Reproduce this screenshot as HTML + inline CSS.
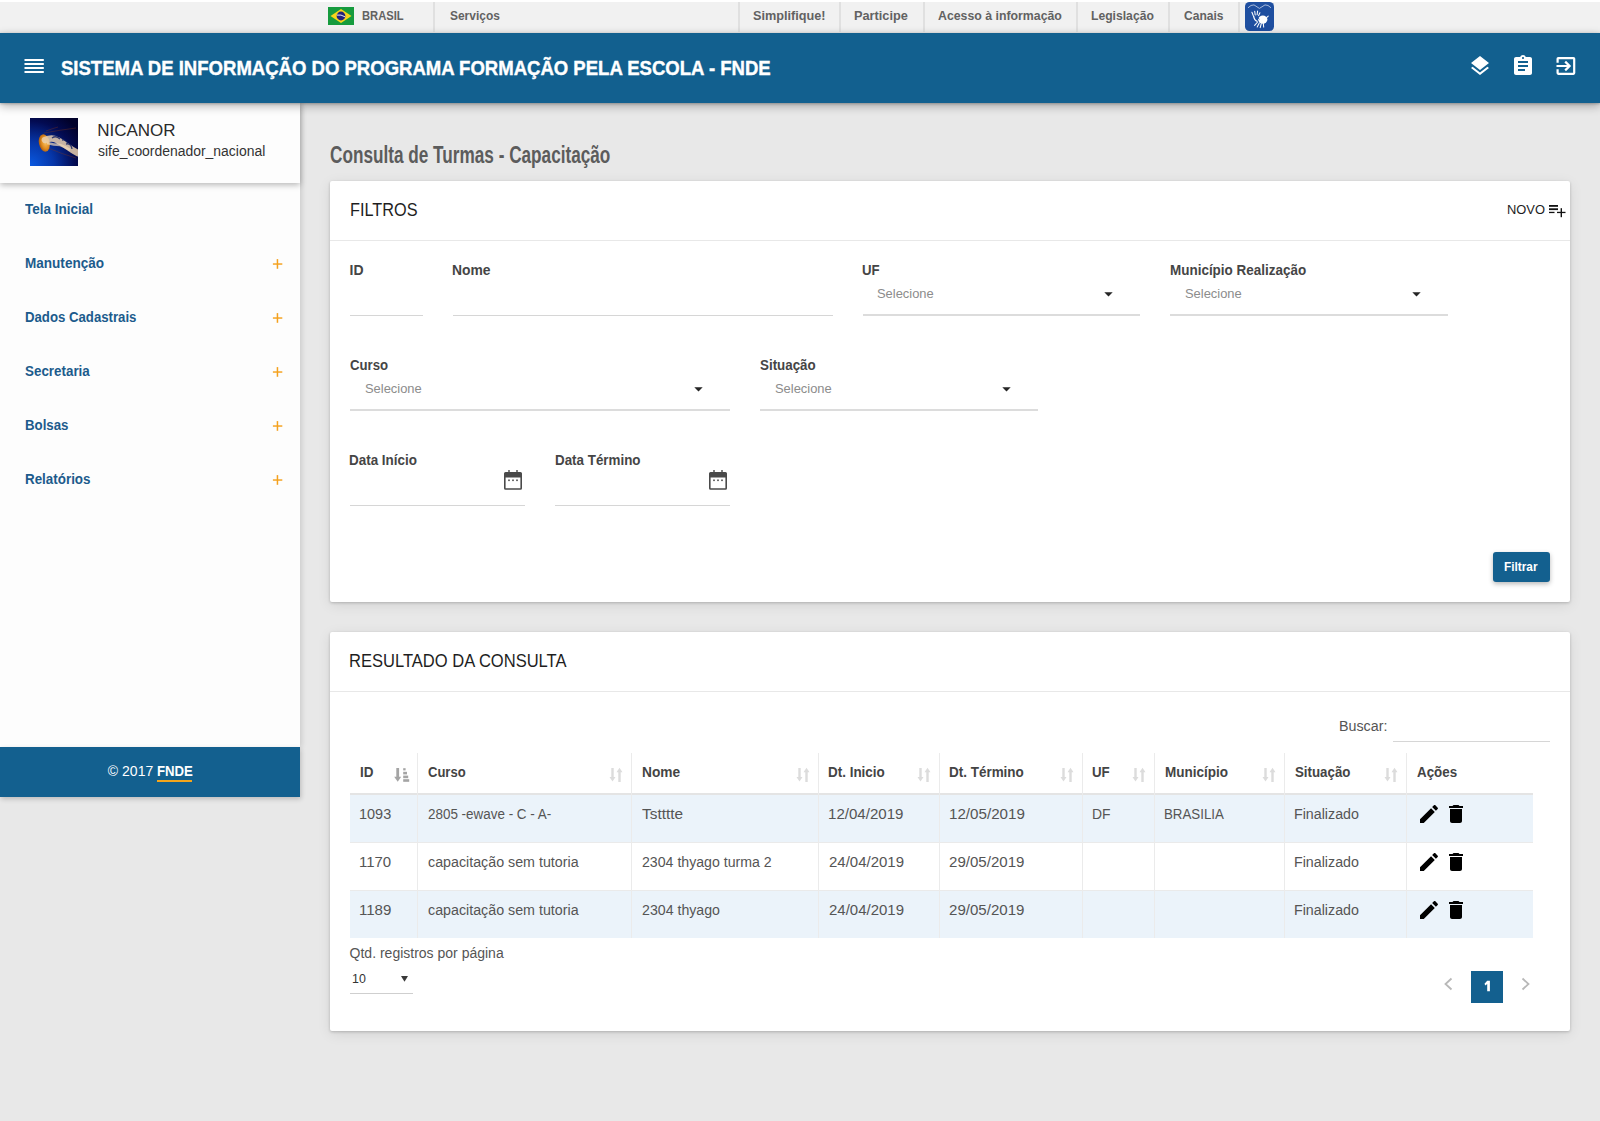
<!DOCTYPE html><html><head><meta charset="utf-8"><title>SIFE</title><style>
*{box-sizing:border-box;margin:0;padding:0}
html,body{width:1600px;height:1121px;overflow:hidden;background:#e8e8e8;font-family:"Liberation Sans",sans-serif;position:relative}
.a{position:absolute}
.t{position:absolute;white-space:nowrap;line-height:1}
</style></head><body>
<div class="a" style="left:0;top:0;width:1600px;height:2px;background:#fff"></div>
<div class="a" style="left:0;top:2px;width:1600px;height:31px;background:linear-gradient(#f1f1f1 0,#f1f1f1 27px,#e9e9e9 31px)"></div>
<div class="a" style="left:433px;top:2px;width:2px;height:30px;background:#e0e0e0"></div>
<div class="a" style="left:738px;top:2px;width:2px;height:30px;background:#e0e0e0"></div>
<div class="a" style="left:839px;top:2px;width:2px;height:30px;background:#e0e0e0"></div>
<div class="a" style="left:923px;top:2px;width:2px;height:30px;background:#e0e0e0"></div>
<div class="a" style="left:1076px;top:2px;width:2px;height:30px;background:#e0e0e0"></div>
<div class="a" style="left:1168px;top:2px;width:2px;height:30px;background:#e0e0e0"></div>
<div class="a" style="left:1238px;top:2px;width:2px;height:30px;background:#e0e0e0"></div>
<svg class="a" style="left:328px;top:7px" width="26" height="18" viewBox="0 0 26 18"><rect width="26" height="18" fill="#169b3e"/><polygon points="2.5,9 13,2 23.5,9 13,16" fill="#f7d51a"/><circle cx="13" cy="9" r="4.4" fill="#24237b"/><path d="M8.8,8.1 Q13,7.2 17.2,9.9" stroke="#fff" stroke-width="0.9" fill="none"/></svg>
<div class="t" style="left:361.72px;top:8.87px;font-size:13.5px;font-weight:bold;color:#626262;transform:scaleX(0.8287);transform-origin:0 0;">BRASIL</div>
<div class="t" style="left:449.64px;top:8.87px;font-size:13.5px;font-weight:bold;color:#626262;transform:scaleX(0.8853);transform-origin:0 0;">Serviços</div>
<div class="t" style="left:752.62px;top:8.87px;font-size:13.5px;font-weight:bold;color:#626262;transform:scaleX(0.9392);transform-origin:0 0;">Simplifique!</div>
<div class="t" style="left:854.11px;top:8.87px;font-size:13.5px;font-weight:bold;color:#626262;transform:scaleX(0.9439);transform-origin:0 0;">Participe</div>
<div class="t" style="left:937.63px;top:8.87px;font-size:13.5px;font-weight:bold;color:#626262;transform:scaleX(0.9120);transform-origin:0 0;">Acesso à informação</div>
<div class="t" style="left:1090.65px;top:8.87px;font-size:13.5px;font-weight:bold;color:#626262;transform:scaleX(0.9003);transform-origin:0 0;">Legislação</div>
<div class="t" style="left:1183.52px;top:8.87px;font-size:13.5px;font-weight:bold;color:#626262;transform:scaleX(0.8912);transform-origin:0 0;">Canais</div>
<svg class="a" style="left:1245px;top:2px" width="29" height="29" viewBox="0 0 29 29"><rect x="0" y="0" width="29" height="29" rx="4.5" fill="#1f4fa0"/>
<path d="M3,5.8 Q6,2.6 9,2.9 L14.4,6.4 L20,2.9 Q23,2.6 26,5.8" stroke="#c9d4ea" stroke-width="0.8" fill="none"/>
<path d="M8.3,13.8 L6.9,10.2 M10.2,13 L9.7,9.3 M12.1,12.8 L12.6,9 M13.6,13.6 L14.9,10.8" stroke="#fff" stroke-width="1.05" stroke-linecap="round" fill="none"/>
<path d="M8.6,14 Q9.2,18.5 12.5,19.5" stroke="#fff" stroke-width="1.3" fill="none"/>
<path d="M12.6,20 L9.6,23.4 M14.3,21 L12.2,25 M16.3,21.5 L15.2,25.6 M18.3,21.2 L18.7,25.1" stroke="#fff" stroke-width="1.05" stroke-linecap="round" fill="none"/>
<ellipse cx="17.8" cy="17.6" rx="4.6" ry="4.1" fill="#fff"/><path d="M21.6,15.6 L23.2,14.2" stroke="#fff" stroke-width="1.1" stroke-linecap="round"/>
<path d="M11.5,16.2 Q13.5,15.2 14.4,17.4" stroke="#1f4fa0" stroke-width="0.8" fill="none"/></svg>
<div class="a" style="left:0;top:33px;width:1600px;height:70px;background:#12608f;box-shadow:0 1px 2px rgba(0,0,0,.2),0 3px 9px rgba(0,0,0,.3);z-index:5"></div>
<div class="a" style="left:0;top:33px;width:1600px;height:70px;z-index:6">
<svg class="a" style="left:24px;top:25px" width="21" height="15"><g fill="#fff"><rect x="0.5" y="1" width="19.3" height="2"/><rect x="0.5" y="5" width="19.3" height="2"/><rect x="0.5" y="9" width="19.3" height="2"/><rect x="0.5" y="13" width="19.3" height="2"/></g></svg>
</div>
<div class="t" style="left:60.94px;top:58.07px;font-size:20px;font-weight:bold;color:#fff;transform:scaleX(0.9266);transform-origin:0 0;z-index:7;-webkit-text-stroke:0.4px #fff;">SISTEMA DE INFORMAÇÃO DO PROGRAMA FORMAÇÃO PELA ESCOLA - FNDE</div>
<svg class="a" style="left:1468px;top:54px;z-index:7" width="24" height="24" viewBox="0 0 24 24"><path fill="#fff" d="M11.99 18.54l-7.37-5.73L3 14.07l9 7 9-7-1.63-1.27-7.38 5.74zM12 16l7.36-5.73L21 9l-9-7-9 7 1.63 1.27L12 16z"/></svg>
<svg class="a" style="left:1511px;top:54px;z-index:7" width="24" height="24" viewBox="0 0 24 24"><path fill="#fff" d="M19 3h-4.18C14.4 1.84 13.3 1 12 1c-1.3 0-2.4.84-2.82 2H5c-1.1 0-2 .9-2 2v14c0 1.1.9 2 2 2h14c1.1 0 2-.9 2-2V5c0-1.1-.9-2-2-2zm-7 0c.55 0 1 .45 1 1s-.45 1-1 1-1-.45-1-1 .45-1 1-1zm2 14H7v-2h7v2zm3-4H7v-2h10v2zm0-4H7V7h10v2z"/></svg>
<svg class="a" style="left:1553px;top:54px;z-index:7" width="26" height="24" viewBox="0 0 26 24"><path d="M4.6,8.8 V4.8 Q4.6,4.1 5.3,4.1 H20.5 Q21.2,4.1 21.2,4.8 V19.1 Q21.2,19.8 20.5,19.8 H5.3 Q4.6,19.8 4.6,19.1 V15.3" stroke="#fff" stroke-width="2.2" fill="none"/><path d="M3.5,12 H16.5 M12.2,7.6 L16.6,12 L12.2,16.4" stroke="#fff" stroke-width="2.2" fill="none"/></svg>
<div class="a" style="left:0;top:103px;width:300px;height:644px;background:#fdfdfd;box-shadow:2px 0 5px rgba(0,0,0,.12);z-index:2"></div>
<div class="a" style="left:0;top:747px;width:300px;height:50px;background:#13608f;box-shadow:1px 2px 5px rgba(0,0,0,.2);z-index:2"></div>
<div class="a" style="left:0;top:103px;width:300px;height:80px;background:#fdfdfd;box-shadow:0 2px 6px rgba(0,0,0,.28);z-index:3"></div>
<svg class="a" style="left:30px;top:118px;z-index:4" width="48" height="48" viewBox="0 0 48 48"><defs><radialGradient id="av" cx="0" cy="1" r="1.25"><stop offset="0" stop-color="#0a5ae2"/><stop offset=".4" stop-color="#0636a8"/><stop offset=".75" stop-color="#030b52"/><stop offset="1" stop-color="#01012a"/></radialGradient><radialGradient id="bell" cx=".6" cy=".5" r=".6"><stop offset="0" stop-color="#f8c060"/><stop offset=".6" stop-color="#e08a1e"/><stop offset="1" stop-color="#a85a10"/></radialGradient></defs><rect width="48" height="48" fill="url(#av)"/>
<path d="M14,15 Q30,12 46,10 M18,30 Q32,36 46,40 M16,13 Q24,10 28,9" stroke="#8a3a18" stroke-width=".5" fill="none" opacity=".7"/>
<ellipse cx="14.3" cy="25" rx="5.4" ry="8.8" transform="rotate(-12 14.3 25)" fill="url(#bell)"/>
<path d="M15,22 Q22,19 27,22 Q33,25 38,29 Q42,32 47.5,35" stroke="#e9cfae" stroke-width="6.5" fill="none" opacity=".85" stroke-linecap="round"/>
<path d="M17,25 Q24,27 30,27 Q36,29 40,32" stroke="#f0d8b8" stroke-width="2.5" fill="none" opacity=".7"/>
<path d="M22,20 Q26,17 30,21 M32,22 Q36,21 38,26 M36,26 Q41,25 42,31" stroke="#0a1a60" stroke-width="1.3" fill="none" opacity=".8"/>
</svg>
<div class="t" style="left:97.14px;top:121.81px;font-size:17px;font-weight:normal;color:#2a2a2a;z-index:4;">NICANOR</div>
<div class="t" style="left:97.58px;top:144.40px;font-size:14px;font-weight:normal;color:#333;transform:scaleX(0.9947);transform-origin:0 0;z-index:4;">sife_coordenador_nacional</div>
<div class="t" style="left:25.36px;top:202.05px;font-size:14px;font-weight:bold;color:#1c5b8c;transform:scaleX(0.9649);transform-origin:0 0;z-index:4;">Tela Inicial</div>
<div class="t" style="left:24.55px;top:256.05px;font-size:14px;font-weight:bold;color:#1c5b8c;transform:scaleX(0.9678);transform-origin:0 0;z-index:4;">Manutenção</div>
<svg class="a" style="left:270px;top:257.80px;z-index:4" width="16" height="12" viewBox="0 0 16 12"><g fill="#f4a11e"><rect x="2.9" y="5.3" width="9.4" height="1.45"/><rect x="6.7" y="1.1" width="1.5" height="9.7"/></g></svg>
<div class="t" style="left:24.58px;top:310.05px;font-size:14px;font-weight:bold;color:#1c5b8c;transform:scaleX(0.9421);transform-origin:0 0;z-index:4;">Dados Cadastrais</div>
<svg class="a" style="left:270px;top:311.80px;z-index:4" width="16" height="12" viewBox="0 0 16 12"><g fill="#f4a11e"><rect x="2.9" y="5.3" width="9.4" height="1.45"/><rect x="6.7" y="1.1" width="1.5" height="9.7"/></g></svg>
<div class="t" style="left:25.10px;top:364.05px;font-size:14px;font-weight:bold;color:#1c5b8c;transform:scaleX(0.9563);transform-origin:0 0;z-index:4;">Secretaria</div>
<svg class="a" style="left:270px;top:365.80px;z-index:4" width="16" height="12" viewBox="0 0 16 12"><g fill="#f4a11e"><rect x="2.9" y="5.3" width="9.4" height="1.45"/><rect x="6.7" y="1.1" width="1.5" height="9.7"/></g></svg>
<div class="t" style="left:24.57px;top:418.05px;font-size:14px;font-weight:bold;color:#1c5b8c;transform:scaleX(0.9464);transform-origin:0 0;z-index:4;">Bolsas</div>
<svg class="a" style="left:270px;top:419.80px;z-index:4" width="16" height="12" viewBox="0 0 16 12"><g fill="#f4a11e"><rect x="2.9" y="5.3" width="9.4" height="1.45"/><rect x="6.7" y="1.1" width="1.5" height="9.7"/></g></svg>
<div class="t" style="left:24.56px;top:472.05px;font-size:14px;font-weight:bold;color:#1c5b8c;transform:scaleX(0.9564);transform-origin:0 0;z-index:4;">Relatórios</div>
<svg class="a" style="left:270px;top:473.80px;z-index:4" width="16" height="12" viewBox="0 0 16 12"><g fill="#f4a11e"><rect x="2.9" y="5.3" width="9.4" height="1.45"/><rect x="6.7" y="1.1" width="1.5" height="9.7"/></g></svg>
<div class="t" style="left:107.86px;top:763.55px;font-size:14px;font-weight:normal;color:#fff;z-index:4;">© 2017 </div>
<div class="a" style="left:157px;top:780px;width:35px;height:2px;background:#f4a51c;z-index:4"></div>
<div class="t" style="left:156.58px;top:763.55px;font-size:14px;font-weight:bold;color:#fff;transform:scaleX(0.9406);transform-origin:0 0;z-index:4;">FNDE</div>
<div class="t" style="left:329.91px;top:143.53px;font-size:23px;font-weight:bold;color:#5c5c5c;transform:scaleX(0.7469);transform-origin:0 0;">Consulta de Turmas - Capacitação</div>
<div class="a" style="left:330px;top:181px;width:1240px;height:421px;background:#fff;border-radius:2px;box-shadow:0 1px 3px rgba(0,0,0,.2),0 3px 14px rgba(0,0,0,.09)"></div>
<div class="a" style="left:330px;top:240px;width:1240px;height:1px;background:#e8e8e8"></div>
<div class="t" style="left:349.70px;top:200.66px;font-size:18px;font-weight:normal;color:#1e1e1e;transform:scaleX(0.9038);transform-origin:0 0;">FILTROS</div>
<div class="t" style="left:1506.87px;top:203.27px;font-size:13.5px;font-weight:normal;color:#1e1e1e;transform:scaleX(0.9561);transform-origin:0 0;">NOVO</div>
<svg class="a" style="left:1548px;top:203px" width="19" height="16"><g fill="#111"><rect x="1" y="2" width="9" height="1.8"/><rect x="1" y="5.3" width="9" height="1.8"/><rect x="1" y="8.8" width="5.5" height="1.3"/><rect x="9" y="8.8" width="8.5" height="1.3"/><rect x="12.6" y="5.2" width="1.4" height="9"/></g></svg>
<div class="t" style="left:349.52px;top:263.15px;font-size:14px;font-weight:bold;color:#454545;">ID</div>
<div class="t" style="left:452.03px;top:263.15px;font-size:14px;font-weight:bold;color:#454545;transform:scaleX(0.9898);transform-origin:0 0;">Nome</div>
<div class="t" style="left:862.21px;top:263.15px;font-size:14px;font-weight:bold;color:#454545;transform:scaleX(0.9447);transform-origin:0 0;">UF</div>
<div class="t" style="left:1169.56px;top:263.15px;font-size:14px;font-weight:bold;color:#454545;transform:scaleX(0.9614);transform-origin:0 0;">Município Realização</div>
<div class="a" style="left:350px;top:315px;width:73px;height:1px;background:#d6d6d6"></div>
<div class="a" style="left:453px;top:315px;width:380px;height:1px;background:#d6d6d6"></div>
<div class="a" style="left:863px;top:314px;width:277px;height:2px;background:#dcdcdc"></div>
<div class="a" style="left:1170px;top:314px;width:278px;height:2px;background:#dcdcdc"></div>
<div class="t" style="left:877.35px;top:287.00px;font-size:13px;font-weight:normal;color:#8c8c8c;transform:scaleX(0.9928);transform-origin:0 0;">Selecione</div>
<div class="t" style="left:1184.55px;top:287.00px;font-size:13px;font-weight:normal;color:#8c8c8c;transform:scaleX(0.9928);transform-origin:0 0;">Selecione</div>
<svg class="a" style="left:1103.5px;top:291.5px" width="9" height="5"><path d="M0.3,0.3 H8.7 L4.5,4.6Z" fill="#252525"/></svg>
<svg class="a" style="left:1411.5px;top:291.5px" width="9" height="5"><path d="M0.3,0.3 H8.7 L4.5,4.6Z" fill="#252525"/></svg>
<div class="t" style="left:349.97px;top:358.05px;font-size:14px;font-weight:bold;color:#454545;transform:scaleX(0.9405);transform-origin:0 0;">Curso</div>
<div class="t" style="left:759.80px;top:358.05px;font-size:14px;font-weight:bold;color:#454545;transform:scaleX(0.9547);transform-origin:0 0;">Situação</div>
<div class="t" style="left:364.85px;top:381.80px;font-size:13px;font-weight:normal;color:#8c8c8c;transform:scaleX(0.9928);transform-origin:0 0;">Selecione</div>
<div class="t" style="left:774.85px;top:381.80px;font-size:13px;font-weight:normal;color:#8c8c8c;transform:scaleX(0.9928);transform-origin:0 0;">Selecione</div>
<svg class="a" style="left:693.5px;top:386.5px" width="9" height="5"><path d="M0.3,0.3 H8.7 L4.5,4.6Z" fill="#252525"/></svg>
<svg class="a" style="left:1001.5px;top:386.5px" width="9" height="5"><path d="M0.3,0.3 H8.7 L4.5,4.6Z" fill="#252525"/></svg>
<div class="a" style="left:350px;top:409px;width:380px;height:2px;background:#dcdcdc"></div>
<div class="a" style="left:760px;top:409px;width:278px;height:2px;background:#dcdcdc"></div>
<div class="t" style="left:349.06px;top:452.90px;font-size:14px;font-weight:bold;color:#454545;transform:scaleX(0.9596);transform-origin:0 0;">Data Início</div>
<div class="t" style="left:554.66px;top:452.90px;font-size:14px;font-weight:bold;color:#454545;transform:scaleX(0.9554);transform-origin:0 0;">Data Término</div>
<svg class="a" style="left:504px;top:470px" width="18" height="20" viewBox="0 0 18 20"><g fill="#4a4a4a"><rect x="4.3" y="0" width="1.4" height="3"/><rect x="12.3" y="0" width="1.4" height="3"/><path d="M1.5,2 H16.5 Q18,2 18,3.5 V18.3 Q18,19.8 16.5,19.8 H1.5 Q0,19.8 0,18.3 V3.5 Q0,2 1.5,2Z M1.6,7.5 V18.2 H16.4 V7.5Z"/><rect x="4.2" y="9.5" width="1.6" height="1.6"/><rect x="8.2" y="9.5" width="1.6" height="1.6"/><rect x="12.2" y="9.5" width="1.6" height="1.6"/></g></svg>
<svg class="a" style="left:709px;top:470px" width="18" height="20" viewBox="0 0 18 20"><g fill="#4a4a4a"><rect x="4.3" y="0" width="1.4" height="3"/><rect x="12.3" y="0" width="1.4" height="3"/><path d="M1.5,2 H16.5 Q18,2 18,3.5 V18.3 Q18,19.8 16.5,19.8 H1.5 Q0,19.8 0,18.3 V3.5 Q0,2 1.5,2Z M1.6,7.5 V18.2 H16.4 V7.5Z"/><rect x="4.2" y="9.5" width="1.6" height="1.6"/><rect x="8.2" y="9.5" width="1.6" height="1.6"/><rect x="12.2" y="9.5" width="1.6" height="1.6"/></g></svg>
<div class="a" style="left:350px;top:505px;width:175px;height:1px;background:#d6d6d6"></div>
<div class="a" style="left:555px;top:505px;width:175px;height:1px;background:#d6d6d6"></div>
<div class="a" style="left:1493px;top:552px;width:57px;height:30px;background:#13608f;border-radius:3px;box-shadow:0 2px 5px rgba(0,0,0,.28)"></div>
<div class="t" style="left:1504.42px;top:561.02px;font-size:12.5px;font-weight:bold;color:#fff;transform:scaleX(0.9455);transform-origin:0 0;">Filtrar</div>
<div class="a" style="left:330px;top:632px;width:1240px;height:399px;background:#fff;border-radius:2px;box-shadow:0 1px 3px rgba(0,0,0,.2),0 3px 14px rgba(0,0,0,.09)"></div>
<div class="a" style="left:330px;top:691px;width:1240px;height:1px;background:#e8e8e8"></div>
<div class="t" style="left:349.48px;top:651.76px;font-size:18px;font-weight:normal;color:#1e1e1e;transform:scaleX(0.9188);transform-origin:0 0;">RESULTADO DA CONSULTA</div>
<div class="t" style="left:1339.46px;top:719.15px;font-size:14px;font-weight:normal;color:#555;transform:scaleX(1.0204);transform-origin:0 0;">Buscar:</div>
<div class="a" style="left:1393px;top:741px;width:157px;height:1px;background:#d6d6d6"></div>
<div class="a" style="left:350px;top:794px;width:1183px;height:48px;background:#ebf3fa"></div>
<div class="a" style="left:350px;top:891px;width:1183px;height:47px;background:#ebf3fa"></div>
<div class="a" style="left:350px;top:793px;width:1183px;height:2px;background:#e4e4e4"></div>
<div class="a" style="left:350px;top:842px;width:1183px;height:1px;background:#eaeaea"></div>
<div class="a" style="left:350px;top:890px;width:1183px;height:1px;background:#eaeaea"></div>
<div class="a" style="left:417px;top:753px;width:1px;height:185px;background:#ebebeb"></div>
<div class="a" style="left:631px;top:753px;width:1px;height:185px;background:#ebebeb"></div>
<div class="a" style="left:818px;top:753px;width:1px;height:185px;background:#ebebeb"></div>
<div class="a" style="left:939px;top:753px;width:1px;height:185px;background:#ebebeb"></div>
<div class="a" style="left:1082px;top:753px;width:1px;height:185px;background:#ebebeb"></div>
<div class="a" style="left:1154px;top:753px;width:1px;height:185px;background:#ebebeb"></div>
<div class="a" style="left:1284px;top:753px;width:1px;height:185px;background:#ebebeb"></div>
<div class="a" style="left:1406px;top:753px;width:1px;height:185px;background:#ebebeb"></div>
<div class="t" style="left:359.56px;top:765.15px;font-size:14px;font-weight:bold;color:#444;transform:scaleX(0.9631);transform-origin:0 0;">ID</div>
<div class="t" style="left:427.98px;top:765.15px;font-size:14px;font-weight:bold;color:#444;transform:scaleX(0.9304);transform-origin:0 0;">Curso</div>
<div class="t" style="left:641.64px;top:765.15px;font-size:14px;font-weight:bold;color:#444;transform:scaleX(0.9791);transform-origin:0 0;">Nome</div>
<div class="t" style="left:828.31px;top:765.15px;font-size:14px;font-weight:bold;color:#444;transform:scaleX(0.9602);transform-origin:0 0;">Dt. Inicio</div>
<div class="t" style="left:949.06px;top:765.15px;font-size:14px;font-weight:bold;color:#444;transform:scaleX(0.9618);transform-origin:0 0;">Dt. Término</div>
<div class="t" style="left:1092.20px;top:765.15px;font-size:14px;font-weight:bold;color:#444;transform:scaleX(0.9505);transform-origin:0 0;">UF</div>
<div class="t" style="left:1164.55px;top:765.15px;font-size:14px;font-weight:bold;color:#444;transform:scaleX(0.9655);transform-origin:0 0;">Município</div>
<div class="t" style="left:1295.10px;top:765.15px;font-size:14px;font-weight:bold;color:#444;transform:scaleX(0.9495);transform-origin:0 0;">Situação</div>
<div class="t" style="left:1416.60px;top:765.15px;font-size:14px;font-weight:bold;color:#444;transform:scaleX(0.9536);transform-origin:0 0;">Ações</div>
<svg class="a" style="left:609px;top:767px" width="16" height="16" viewBox="0 0 16 16"><g fill="#dcdcdc"><rect x="2.3" y="1" width="2.4" height="10"/><path d="M0.5,10 H6.5 L3.5,14.5Z"/><rect x="9.3" y="4.5" width="2.4" height="10.5"/><path d="M7.5,5.2 H13.5 L10.5,0.8Z"/></g></svg>
<svg class="a" style="left:796px;top:767px" width="16" height="16" viewBox="0 0 16 16"><g fill="#dcdcdc"><rect x="2.3" y="1" width="2.4" height="10"/><path d="M0.5,10 H6.5 L3.5,14.5Z"/><rect x="9.3" y="4.5" width="2.4" height="10.5"/><path d="M7.5,5.2 H13.5 L10.5,0.8Z"/></g></svg>
<svg class="a" style="left:917px;top:767px" width="16" height="16" viewBox="0 0 16 16"><g fill="#dcdcdc"><rect x="2.3" y="1" width="2.4" height="10"/><path d="M0.5,10 H6.5 L3.5,14.5Z"/><rect x="9.3" y="4.5" width="2.4" height="10.5"/><path d="M7.5,5.2 H13.5 L10.5,0.8Z"/></g></svg>
<svg class="a" style="left:1060px;top:767px" width="16" height="16" viewBox="0 0 16 16"><g fill="#dcdcdc"><rect x="2.3" y="1" width="2.4" height="10"/><path d="M0.5,10 H6.5 L3.5,14.5Z"/><rect x="9.3" y="4.5" width="2.4" height="10.5"/><path d="M7.5,5.2 H13.5 L10.5,0.8Z"/></g></svg>
<svg class="a" style="left:1132px;top:767px" width="16" height="16" viewBox="0 0 16 16"><g fill="#dcdcdc"><rect x="2.3" y="1" width="2.4" height="10"/><path d="M0.5,10 H6.5 L3.5,14.5Z"/><rect x="9.3" y="4.5" width="2.4" height="10.5"/><path d="M7.5,5.2 H13.5 L10.5,0.8Z"/></g></svg>
<svg class="a" style="left:1262px;top:767px" width="16" height="16" viewBox="0 0 16 16"><g fill="#dcdcdc"><rect x="2.3" y="1" width="2.4" height="10"/><path d="M0.5,10 H6.5 L3.5,14.5Z"/><rect x="9.3" y="4.5" width="2.4" height="10.5"/><path d="M7.5,5.2 H13.5 L10.5,0.8Z"/></g></svg>
<svg class="a" style="left:1384px;top:767px" width="16" height="16" viewBox="0 0 16 16"><g fill="#dcdcdc"><rect x="2.3" y="1" width="2.4" height="10"/><path d="M0.5,10 H6.5 L3.5,14.5Z"/><rect x="9.3" y="4.5" width="2.4" height="10.5"/><path d="M7.5,5.2 H13.5 L10.5,0.8Z"/></g></svg>
<svg class="a" style="left:394px;top:767px" width="16" height="16" viewBox="0 0 16 16"><g fill="#a4a4a4"><rect x="2.3" y="1" width="2.8" height="10"/><path d="M0.2,9.8 H7.2 L3.7,14.8Z"/><rect x="9.2" y="1.2" width="2.4" height="2.2"/><rect x="9.2" y="4.8" width="3.8" height="2.6"/><rect x="9.2" y="8.6" width="5" height="2.6"/><rect x="9.2" y="12.2" width="6" height="2.6"/></g></svg>
<div class="t" style="left:359.34px;top:806.85px;font-size:14px;font-weight:normal;color:#555;transform:scaleX(1.0340);transform-origin:0 0;">1093</div>
<div class="t" style="left:427.83px;top:806.85px;font-size:14px;font-weight:normal;color:#555;transform:scaleX(0.9597);transform-origin:0 0;">2805 -ewave - C - A-</div>
<div class="t" style="left:642.29px;top:806.85px;font-size:14px;font-weight:normal;color:#555;transform:scaleX(1.0989);transform-origin:0 0;">Tstttte</div>
<div class="t" style="left:828.04px;top:806.85px;font-size:14px;font-weight:normal;color:#555;transform:scaleX(1.0773);transform-origin:0 0;">12/04/2019</div>
<div class="t" style="left:948.79px;top:806.85px;font-size:14px;font-weight:normal;color:#555;transform:scaleX(1.0831);transform-origin:0 0;">12/05/2019</div>
<div class="t" style="left:1091.89px;top:806.85px;font-size:14px;font-weight:normal;color:#555;transform:scaleX(0.9917);transform-origin:0 0;">DF</div>
<div class="t" style="left:1164.44px;top:806.85px;font-size:14px;font-weight:normal;color:#555;transform:scaleX(0.9502);transform-origin:0 0;">BRASILIA</div>
<div class="t" style="left:1294.36px;top:806.85px;font-size:14px;font-weight:normal;color:#555;transform:scaleX(1.0167);transform-origin:0 0;">Finalizado</div>
<svg class="a" style="left:1417px;top:802px" width="24" height="24" viewBox="0 0 24 24"><path fill="#000" d="M3 17.25V21h3.75L17.81 9.94l-3.75-3.75L3 17.25zM20.71 7.04c.39-.39.39-1.02 0-1.41l-2.34-2.34c-.39-.39-1.02-.39-1.41 0l-1.83 1.83 3.75 3.75 1.83-1.83z"/></svg>
<svg class="a" style="left:1444px;top:802px" width="24" height="24" viewBox="0 0 24 24"><path fill="#000" d="M6 19c0 1.1.9 2 2 2h8c1.1 0 2-.9 2-2V7H6v12zM19 4h-3.5l-1-1h-5l-1 1H5v2h14V4z"/></svg>
<div class="t" style="left:359.30px;top:854.85px;font-size:14px;font-weight:normal;color:#555;transform:scaleX(1.0697);transform-origin:0 0;">1170</div>
<div class="t" style="left:427.93px;top:854.85px;font-size:14px;font-weight:normal;color:#555;transform:scaleX(1.0185);transform-origin:0 0;">capacitação sem tutoria</div>
<div class="t" style="left:641.89px;top:854.85px;font-size:14px;font-weight:normal;color:#555;transform:scaleX(1.0101);transform-origin:0 0;">2304 thyago turma 2</div>
<div class="t" style="left:828.50px;top:854.85px;font-size:14px;font-weight:normal;color:#555;transform:scaleX(1.0707);transform-origin:0 0;">24/04/2019</div>
<div class="t" style="left:949.25px;top:854.85px;font-size:14px;font-weight:normal;color:#555;transform:scaleX(1.0765);transform-origin:0 0;">29/05/2019</div>
<div class="t" style="left:1294.36px;top:854.85px;font-size:14px;font-weight:normal;color:#555;transform:scaleX(1.0167);transform-origin:0 0;">Finalizado</div>
<svg class="a" style="left:1417px;top:850px" width="24" height="24" viewBox="0 0 24 24"><path fill="#000" d="M3 17.25V21h3.75L17.81 9.94l-3.75-3.75L3 17.25zM20.71 7.04c.39-.39.39-1.02 0-1.41l-2.34-2.34c-.39-.39-1.02-.39-1.41 0l-1.83 1.83 3.75 3.75 1.83-1.83z"/></svg>
<svg class="a" style="left:1444px;top:850px" width="24" height="24" viewBox="0 0 24 24"><path fill="#000" d="M6 19c0 1.1.9 2 2 2h8c1.1 0 2-.9 2-2V7H6v12zM19 4h-3.5l-1-1h-5l-1 1H5v2h14V4z"/></svg>
<div class="t" style="left:359.30px;top:902.85px;font-size:14px;font-weight:normal;color:#555;transform:scaleX(1.0750);transform-origin:0 0;">1189</div>
<div class="t" style="left:427.93px;top:902.85px;font-size:14px;font-weight:normal;color:#555;transform:scaleX(1.0185);transform-origin:0 0;">capacitação sem tutoria</div>
<div class="t" style="left:641.89px;top:902.85px;font-size:14px;font-weight:normal;color:#555;transform:scaleX(1.0121);transform-origin:0 0;">2304 thyago</div>
<div class="t" style="left:828.50px;top:902.85px;font-size:14px;font-weight:normal;color:#555;transform:scaleX(1.0707);transform-origin:0 0;">24/04/2019</div>
<div class="t" style="left:949.25px;top:902.85px;font-size:14px;font-weight:normal;color:#555;transform:scaleX(1.0765);transform-origin:0 0;">29/05/2019</div>
<div class="t" style="left:1294.36px;top:902.85px;font-size:14px;font-weight:normal;color:#555;transform:scaleX(1.0167);transform-origin:0 0;">Finalizado</div>
<svg class="a" style="left:1417px;top:898px" width="24" height="24" viewBox="0 0 24 24"><path fill="#000" d="M3 17.25V21h3.75L17.81 9.94l-3.75-3.75L3 17.25zM20.71 7.04c.39-.39.39-1.02 0-1.41l-2.34-2.34c-.39-.39-1.02-.39-1.41 0l-1.83 1.83 3.75 3.75 1.83-1.83z"/></svg>
<svg class="a" style="left:1444px;top:898px" width="24" height="24" viewBox="0 0 24 24"><path fill="#000" d="M6 19c0 1.1.9 2 2 2h8c1.1 0 2-.9 2-2V7H6v12zM19 4h-3.5l-1-1h-5l-1 1H5v2h14V4z"/></svg>
<div class="t" style="left:349.60px;top:945.95px;font-size:14px;font-weight:normal;color:#555;">Qtd. registros por página</div>
<div class="t" style="left:351.61px;top:972.54px;font-size:12px;font-weight:normal;color:#333;transform:scaleX(1.0333);transform-origin:0 0;">10</div>
<svg class="a" style="left:400.5px;top:976px" width="7" height="6"><path d="M0,0 H7 L3.5,5.8Z" fill="#3a3a3a"/></svg>
<div class="a" style="left:350px;top:993px;width:63px;height:1px;background:#cfcfcf"></div>
<svg class="a" style="left:1442px;top:977px" width="12" height="14"><path d="M9.5,1.5 L3.5,7 L9.5,12.5" stroke="#b8b8b8" stroke-width="1.8" fill="none"/></svg>
<svg class="a" style="left:1520px;top:977px" width="12" height="14"><path d="M2.5,1.5 L8.5,7 L2.5,12.5" stroke="#b8b8b8" stroke-width="1.8" fill="none"/></svg>
<div class="a" style="left:1471px;top:971px;width:32px;height:32px;background:#13608f"></div>
<svg class="a" style="left:1482.5px;top:980px" width="8" height="12" viewBox="0 0 8 12"><path d="M4.2,0.7 H6.9 V11.3 H4.2 V4 L2.3,5.4 L1.5,3.8Z" fill="#fff"/></svg>
</body></html>
